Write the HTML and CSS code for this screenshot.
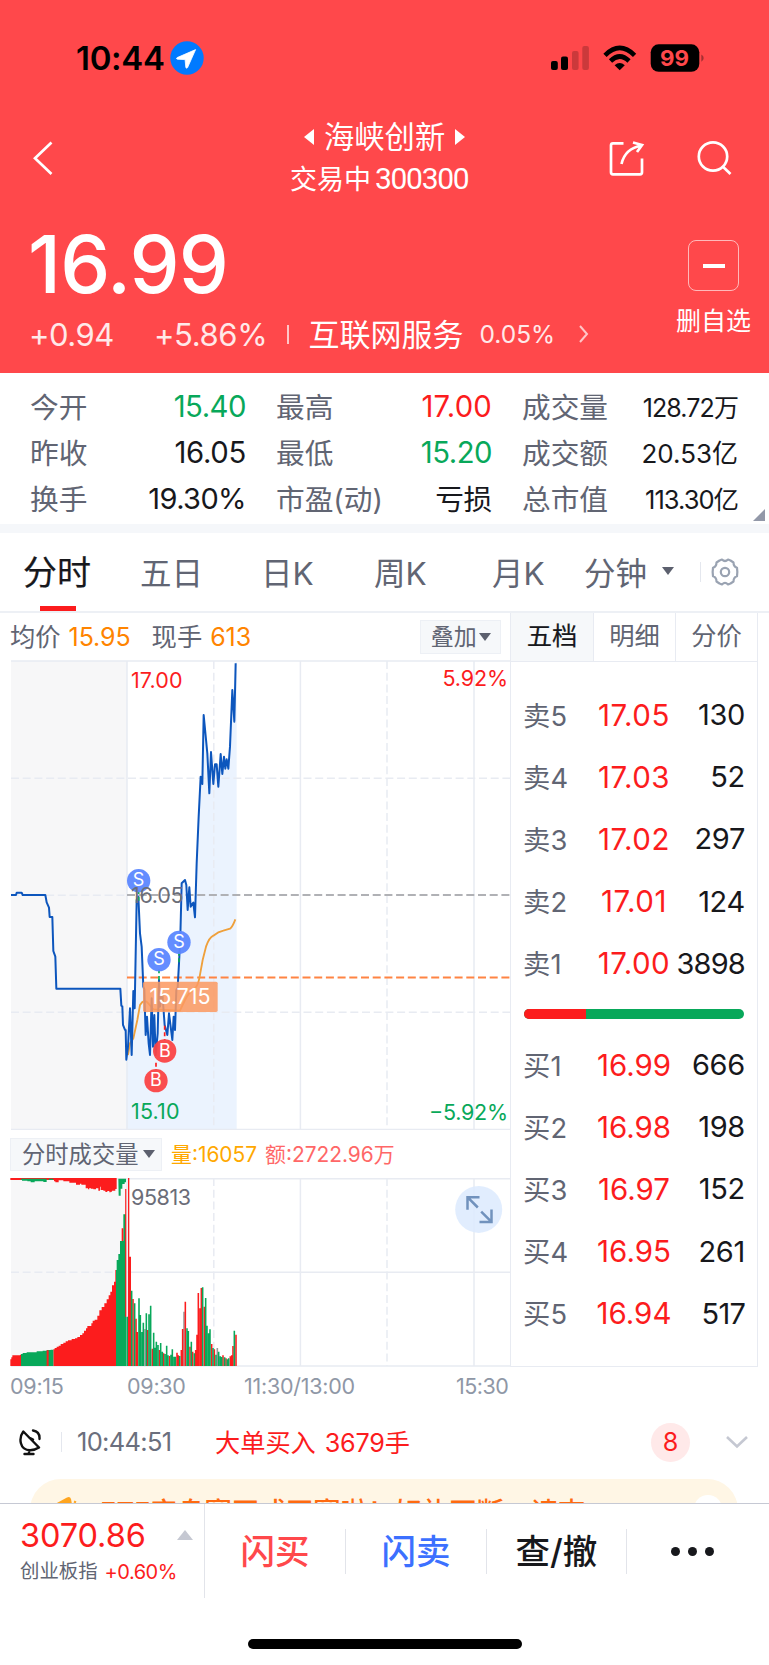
FILE: index.html
```html
<!DOCTYPE html>
<html lang="zh-CN">
<head>
<meta charset="utf-8">
<title>海峡创新 300300</title>
<link rel="stylesheet" href="styles.css">
</head>
<body>
<div class="app">
  <header class="header">
    <div class="status">
      <span class="clock">10:44</span>
      <svg class="loc" width="34" height="34" viewBox="0 0 34 34"><circle cx="17" cy="17" r="16.7" fill="#007aff"/><path d="M25.600 8.600 7.200 16.600c-1 .5-.8 1.500.3 1.600l7.600.4.700 7.700c.2 1 1.300 1.200 1.800.2Z" fill="#fff" stroke="#fff" stroke-width=".8" stroke-linejoin="round"/></svg>
      <svg class="sys" width="156" height="30" viewBox="549 42 156 30">
        <rect x="551" y="60" width="6.800" height="9" rx="2"/><rect x="561" y="55.500" width="7" height="13.500" rx="2"/>
        <g fill="#000" opacity=".2"><rect x="572" y="50" width="6.600" height="19" rx="2"/><rect x="582.300" y="45" width="6.600" height="24" rx="2"/></g>
        <g fill="none" stroke="#000" stroke-width="4.600"><path d="M605 54.300Q619.700 39.500 634.600 54.300"/><path d="M610.500 60Q619.700 51 629 60"/></g>
        <path d="M614.600 64.300Q619.700 59.600 624.800 64.300L619.700 69.300Z"/>
        <rect x="650.700" y="43.300" width="48.600" height="27.500" rx="8"/><path d="M701.300 53.500q2.400 1 2.400 3.600t-2.400 3.600Z" opacity=".35"/>
        <text x="660" y="65.300" class="batt" textLength="29" lengthAdjust="spacingAndGlyphs">99</text>
      </svg>
    </div>
    <nav class="nav">
      <svg class="back" width="22" height="36" viewBox="32 140 22 36"><path d="M51.500 142.500 35 158.200 51.500 174" /></svg>
      <div class="title">
        <div class="name"><i class="tri left"></i><span>海峡创新</span><i class="tri right"></i></div>
        <div class="code"><span>交易中</span><b>300300</b></div>
      </div>
      <svg class="act" width="126" height="38" viewBox="608 139 126 38">
        <path d="M623.500 143.300H613q-2 0-2 2v27q0 2 2 2h27q2 0 2-2V158.500"/><path d="M621.500 164Q625 148.500 641.500 145.500M633 142.500l9 2.500-5 7"/>
        <circle cx="713" cy="156.500" r="14.200"/><path d="M722.700 166.500 730.500 174"/>
      </svg>
    </nav>
    <div class="hero">
      <div class="hero-l">
        <div class="price">16.99</div>
        <div class="chg"><span class="c1">+0.94</span><span class="c2">+5.86%</span><i></i><span class="ind">互联网服务</span><span class="c3">0.05%</span>
          <svg width="12" height="20" viewBox="0 0 12 20"><path d="M2 2l7 8-7 8" fill="none" stroke="#ffc6c7" stroke-width="2"/></svg></div>
      </div>
      <div class="fav"><div class="minus"><i></i></div><span>删自选</span></div>
    </div>
  </header>

  <section class="quote">
    <div class="q"><span>今开</span><b class="g">15.40</b></div><div class="q"><span>最高</span><b class="r">17.00</b></div><div class="q s"><span>成交量</span><b class="n1">128.72万</b></div>
    <div class="q"><span>昨收</span><b>16.05</b></div><div class="q"><span>最低</span><b class="g">15.20</b></div><div class="q s"><span>成交额</span><b class="n2">20.53亿</b></div>
    <div class="q"><span>换手</span><b class="pct">19.30%</b></div><div class="q"><span>市盈(动)</span><b class="cn">亏损</b></div><div class="q s"><span>总市值</span><b class="n3">113.30亿</b></div>
    <i class="corner"></i>
  </section>

  <nav class="tabs">
    <span class="on">分时</span><span>五日</span><span>日K</span><span>周K</span><span>月K</span><span class="min">分钟<i class="down"></i></span>
    <i class="sep"></i>
    <svg width="30" height="30" viewBox="0 0 30 30" fill="none" stroke="#9aa3b2" stroke-width="2.200" stroke-linejoin="round"><path d="M9.500 3.500 12 2.500q3 3 6 0l2.500 1 3 2q0 4.200 3.500 5.200.700 4.300 0 8.600-3.500 1-3.500 5.200l-3 2-2.500 1q-3-3-6 0l-2.500-1-3-2q0-4.200-3.500-5.200-.700-4.300 0-8.600 3.500-1 3.500-5.200Z"/><circle cx="15" cy="15" r="4.200"/></svg>
  </nav>

  <main class="board">
    <div class="charts">
      <div class="info"><span>均价</span><b class="v1">15.95</b><span class="k2">现手</span><b class="v2">613</b><div class="overlay"><span>叠加</span><i class="down"></i></div></div>
      <svg class="chart" width="510" height="470" viewBox="0 660 510 470">
        <rect x="11" y="661" width="116" height="468.500" fill="#f7f7f8"/>
        <g transform="translate(0 650) scale(.33333)"><path class="area" d="M379 1438V1229L384 1190 390 1075 395 1215 400 1023 404 1075 410 750 415 740 420 850 425 890 430 1010 433 1018 437 1155 441 1100 446 1180 450 1215 455 1045 459 1190 463 1095 467 1215 473 1150 477 990 480 1070 487 1030 494 1125 502 1155 507 1090 512 1130 517 1170 521 1100 525 1140 529 1020 533 1012 537 940 541 860 545 700 555 690 559 705 563 780 568 712 572 770 580 758 585 802 590 640 596 500 602 380 607 402 611 195 622 310 628 430 633 306 640 402 645 343 650 343 655 410 662 312 667 372 672 320 676 356 680 328 685 356 690 290 697 120 703 215 707 35H710V1438Z"/></g>
        <g class="grid"><path d="M11 661H510M11 1129.500H510M127 661V1129.500M300.400 661V1129.500M474 661V1129.500"/>
        <path class="dash" d="M213.800 661V1129.500M387 661V1129.500M11 778.200H510M11 895.300H127M11 1012.300H510"/></g>
        <path class="mid" d="M127 895H510"/><path class="cost" d="M127 977.500H510"/>
        <g transform="translate(0 650) scale(.33333)">
          <path class="avg" d="M384 1215 390 1180 400 1165 412 1110 420 1065Q432 1045 445 1060L460 1078 540 1082Q550 1060 555 1050 566 1028 585 1015 594 1005 598 985L608 930 618 890Q628 862 640 857 655 845 670 842L690 836Q698 830 706 808"/>
          <path class="line" d="M33 735H48L50 728H65L68 735H136L140 757 147 773 149 801H157L160 903 166 920 169 1016H361L364 1067 367 1069 369 1125 375 1140H377L379 1229 384 1190 390 1075 395 1215 400 1023 404 1075 410 750 415 740 420 850 425 890 430 1010 433 1018 437 1155 441 1100 446 1180 450 1215 455 1045 459 1190 463 1095 467 1215 473 1150 477 990 480 1070 487 1030 494 1125 502 1155 507 1090 512 1130 517 1170 521 1100 525 1140 529 1020 533 1012 537 940 541 860 545 700 555 690 559 705 563 780 568 712 572 770 580 758 585 802 590 640 596 500 602 380 607 402 611 195 622 310 628 430 633 306 640 402 645 343 650 343 655 410 662 312 667 372 672 320 676 356 680 328 685 356 690 290 697 120 703 215 707 40"/>
          <path class="lead" stroke="#08a85a" d="M416 720V757M477 958V993M537 905V942"/><path class="lead" stroke="#fc1c1d" d="M494 1127V1170M468 1238V1260"/>
          <g fill="#5c87ff" fill-opacity=".95"><circle cx="416" cy="692" r="35"/><circle cx="477" cy="929" r="35"/><circle cx="537" cy="877" r="35"/></g>
          <g fill="#fb4346" fill-opacity=".95"><circle cx="494" cy="1203" r="35"/><circle cx="468" cy="1292" r="35"/></g>
          <rect x="429" y="995" width="224" height="91" rx="5" fill="#fb9961" fill-opacity=".86"/>
        </g>
        <g class="mk"><text x="138.600" y="886.200">S</text><text x="159" y="965.200">S</text><text x="179" y="947.800">S</text><text x="164.800" y="1056.700">B</text><text x="156" y="1086.300">B</text></g>
        <text x="131" y="687.500" fill="#fc1c1d" textLength="51.500">17.00</text>
        <text x="131" y="902.700" fill="#6b6d78" textLength="52.500">16.05</text>
        <text x="131" y="1119.200" fill="#08a85a" textLength="48.500">15.10</text>
        <text x="442.500" y="685.700" fill="#fc1c1d" textLength="65.500">5.92%</text>
        <text x="429" y="1120.300" fill="#08a85a" textLength="79">−5.92%</text>
        <text x="149.500" y="1004.200" fill="#fff" textLength="61">15.715</text>
      </svg>
      <div class="volinfo"><div class="sel"><span>分时成交量</span><i class="down"></i></div><span class="vol">量:16057</span><span class="amt">额:2722.96万</span></div>
      <svg class="chart" width="510" height="190" viewBox="0 1178 510 190">
        <rect x="11" y="1178.500" width="116" height="187.500" fill="#f7f7f8"/>
        <g class="grid"><path d="M11 1178.700H510M127 1272.300H510M11 1366H510M127 1178V1366M300.400 1178V1366M474 1178V1366"/><path class="dash" d="M213.800 1178V1366M387 1178V1366M11 1272.300H127"/></g>
        <g transform="translate(0 1120) scale(.33333)">
          <path fill="#fc1c1d" d="M31 738V718H34V712H37V706H60V704H63V738ZM160 738V688H164V684H170V680H176V677H182V672H190V668H197V664H204V661H215V657H225V655H232V651H240V645H247V640H252V632H258V625H262V618H274V610H278V602H284V599H292V587H298V571H305V561H313V550H320V538H326V526H331V515H336V496H342V485H346V450H350V738Z"/>
          <path fill="#08a85a" d="M63 738V702H68V699H80V697H110V694H128V692H140V690H152V689H160V738ZM348 738V450H350V420H355V402H360V363H370V283H378V738Z"/>
          <path fill="#fc1c1d" d="M140 738V691H146V738ZM365 363V325H370V363ZM375.500 590V207H379V590ZM384 738V173H388V738ZM388 738V410H393V738Z"/><path fill="#08a85a" d="M379 738V590H384V738Z"/>
          <path fill="#fc1c1d" d="M31 174H350V207H346V212H336V215H332V217H328V213H322V216H316V212H310V210H302V200H300V212H295V205H288V208H280V206H272V204H268V208H264V205H257V194H244V191H240V194H228V188H208V184H190V181H176V187H166V184H162V180H31Z"/>
          <path fill="#08a85a" d="M63 176H140V186H130V184H104V187H92V184H82V182H66V180H63ZM146 176H160V180H146ZM355 176H378V187H374V192H367V206H362V227H356Z"/>
          <g fill="none" stroke-width="4.700">
            <path stroke="#999" d="M435 738V627M552 738V575M652 738V684"/>
            <path stroke="#fc1c1d" d="M399 738V537M408 738V596M412 738V636M443 738V630M457 738V686M478 738V690M491 738V700M509 738V708M531 738V698M535 738V706M544 738V690M548 738V627M556 738V545M570 738V680M578 738V695M587 738V690M591 738V644M595 738V519M600 738V565M604 738V504M613 738V560M635 738V672M643 738V688M669 738V706M678 738V715M691 738V709M695 738V706M699 738V678M708 738V644"/>
            <path stroke="#08a85a" d="M395 738V512M404 738V550M417 738V535M421 738V585M426 738V636M430 738V608M439 738V580M447 738V583M452 738V557M461 738V638M465 738V683M469 738V665M474 738V675M482 738V669M487 738V695M495 738V702M500 738V677M504 738V706M513 738V704M517 738V688M522 738V710M526 738V710M539 738V708M561 738V625M565 738V633M574 738V665M583 738V700M608 738V502M617 738V534M621 738V617M626 738V640M630 738V628M639 738V684M648 738V704M656 738V695M661 738V709M665 738V711M674 738V712M682 738V718M686 738V715M703 738V632"/>
          </g>
        </g>
        <text x="131" y="1204.800" fill="#6b6d78" textLength="60">95813</text>
        <circle cx="478.700" cy="1209.400" r="23.500" fill="#dceafe" fill-opacity=".85"/>
        <path d="M479.500 1197.200H467.500V1209.700M467.500 1197.200 477.800 1207.500M479.500 1221.900H491.500V1209.400M491.500 1221.900 481.200 1211.600" fill="none" stroke="#7192bd" stroke-width="2.500"/>
      </svg>
      <div class="axis"><span>09:15</span><span class="a2">09:30</span><span class="a3">11:30/13:00</span><span class="a4">15:30</span></div>
    </div>
    <aside class="book">
      <div class="btabs"><span class="on">五档</span><span>明细</span><span>分价</span></div>
      <div class="rows">
        <div><span>卖5</span><b>17.05</b><em>130</em></div><div><span>卖4</span><b>17.03</b><em>52</em></div><div><span>卖3</span><b>17.02</b><em>297</em></div><div><span>卖2</span><b>17.01</b><em>124</em></div><div><span>卖1</span><b>17.00</b><em>3898</em></div>
      </div>
      <div class="ratio"><i></i></div>
      <div class="rows buys">
        <div><span>买1</span><b>16.99</b><em>666</em></div><div><span>买2</span><b>16.98</b><em>198</em></div><div><span>买3</span><b>16.97</b><em>152</em></div><div><span>买4</span><b>16.95</b><em>261</em></div><div><span>买5</span><b>16.94</b><em>517</em></div>
      </div>
    </aside>
  </main>

  <section class="news">
    <svg width="24" height="28" viewBox="19 1428 24 28" fill="none" stroke="#111" stroke-width="2.400" stroke-linecap="round" stroke-linejoin="round"><path d="M23.300 1431.500C18.500 1438 19.500 1450 30 1450.200Q35 1450.200 39 1447.500ZM29 1437.500 33 1439.500M29 1450.500V1454M24.500 1454H33.500M33 1430.500Q40 1431.500 39.500 1439"/></svg>
    <i class="sep"></i><span class="time">10:44:51</span><span class="msg">大单买入</span><span class="msg m2">3679手</span><span class="badge">8</span>
    <svg class="chev" width="24" height="14" viewBox="0 0 24 14"><path d="M2 2l10 9.500L22 2" fill="none" stroke="#c5c8d2" stroke-width="2.600"/></svg>
  </section>
  <div class="promo"><div class="pill"><svg width="24" height="24" viewBox="0 0 24 24"><path d="M2 7 14 .5q3-1.500 4 1.500l3 16L2 14Z" fill="#ffa51f"/><path d="M21 4.500l2 1" stroke="#ffa51f" stroke-width="2"/></svg><span>ETF实盘赛正式开赛啦！好礼不断，请查</span><i></i></div></div>

  <footer class="bar">
    <div class="idx"><div class="i1"><b>3070.86</b><i class="up"></i></div><div class="i2"><span>创业板指</span><em>+0.60%</em></div></div>
    <div class="btn buy">闪买</div><div class="btn sell">闪卖</div><div class="btn chk">查/撤</div><div class="btn more"><i></i><i></i><i></i></div>
    <div class="home"></div>
  </footer>
</div>
</body>
</html>
```
FILE: styles.css
```css
* { box-sizing: border-box; }
body { margin: 0; background: #fff; }
.app { width: 769px; height: 1665px; overflow: hidden; font-family: Inter, "Noto Sans CJK SC", sans-serif; color: #17181c; display: flex; flex-direction: column; white-space: nowrap; }
b, em, i { font-weight: inherit; font-style: normal; }
svg { display: block; flex: none; }

.header { height: 373px; background: #ff484b; color: #fff; flex: none; }
.status { height: 115px; display: flex; align-items: center; padding-left: 76px; color: #000; }
.clock { width: 94px; font-size: 33px; font-weight: 600; letter-spacing: -.3px; }
.sys { margin-left: 345px; }
.batt { font: 700 22px Inter, sans-serif; fill: #ff484b; }
.nav { height: 90px; display: flex; padding-left: 32px; }
.nav path, .nav circle { fill: none; stroke: #fff; stroke-width: 2.700; }
.back { margin-top: 25px; }
.title { width: 240px; margin-left: 211px; }
.name { display: flex; align-items: center; height: 44px; gap: 10px; padding-left: 39px; font-size: 30.300px; }
.name span { padding-bottom: 5px; }
.tri { border: 8px solid transparent; width: 0; height: 0; }
.tri.left { border-left: 0; border-right: 10px solid #fff; }
.tri.right { border-right: 0; border-left: 10px solid #fff; }
.code { display: flex; align-items: center; height: 39px; padding-left: 25px; font-size: 27px; gap: 4px; }
.code span { padding-bottom: 3px; }
.code b { font: 400 30px Roboto, sans-serif; letter-spacing: -1.300px; }
.act { margin-top: 24px; margin-left: 103px; }
.hero { display: flex; justify-content: space-between; padding: 0 18px 0 30px; }
.price { height: 119px; line-height: 119px; font-size: 79.500px; font-weight: 500; letter-spacing: -.8px; margin-left: -2px; }
.chg { display: flex; align-items: center; height: 20px; font-size: 31px; color: #ffe9e9; margin-left: -1px; }
.c1 { width: 125px; font-size: 31px; letter-spacing: -.5px; }
.c2 { width: 133px; font-size: 31px; letter-spacing: -.4px; }
.chg i { width: 1.500px; height: 19px; background: #ffc6c7; }
.ind { margin-left: 20px; width: 171px; color: #fff; padding-bottom: 4px; }
.c3 { font-size: 24.500px; width: 98px; }
.fav { width: 75px; padding-top: 35px; display: flex; flex-direction: column; align-items: center; font-size: 25px; line-height: 30px; gap: 15px; }
.minus { width: 51px; height: 51px; border: 1.500px solid #ffb9ba; border-radius: 8px; display: grid; place-items: center; }
.minus i { width: 22px; height: 4px; background: #fff; }

.quote { height: 160px; border-bottom: 9px solid #f5f7fa; padding: 10px 31px 0 30px; display: grid; grid-template-columns: 216px 246px 246px; grid-auto-rows: 46.200px; position: relative; flex: none; }
.q { display: flex; justify-content: space-between; align-items: center; font-size: 28.700px; color: #17181c; }
.q:nth-child(3n+2) { padding-left: 30px; }
.q:nth-child(3n) { padding-left: 30px; }
.q span { color: #616573; padding-bottom: 2px; }
.q b { font-size: 29.300px; letter-spacing: -.3px; }
.q .pct { font-size: 29px; letter-spacing: -.6px; }
.q .cn { font-size: 28.700px; padding-bottom: 2px; }
.q .n1, .q .n2, .q .n3 { font-size: 26px; letter-spacing: 0; padding-bottom: 1px; }
.q .n1 { font-size: 25px; letter-spacing: -.9px; }
.q .n3 { font-size: 25.500px; letter-spacing: -1px; }
.q .g { color: #08a85a; letter-spacing: -.5px; }
.q .r { color: #fc1c1d; letter-spacing: .2px; }
.corner { position: absolute; right: 4px; bottom: 3px; border-left: 12px solid transparent; border-bottom: 12px solid #9298a8; }

.tabs { height: 80px; display: grid; grid-template-columns: 117px 121px 113px 118px 92px 116px 10px 30px; padding-left: 23px; font-size: 31.500px; color: #616573; align-items: center; border-bottom: 2px solid #edf0f5; flex: none; }
.tabs span { padding-bottom: 2px; }
.tabs .on { font-size: 34px; color: #17181c; -webkit-text-stroke: .2px #17181c; height: 78px; line-height: 79px; background: linear-gradient(#fc1c1d, #fc1c1d) 17px 73px / 36px 5px no-repeat; }
.min { display: flex; align-items: center; gap: 15px; }
.down { display: inline-block; border: 6px solid transparent; border-top: 8px solid #5c606e; border-bottom: 0; }
.sep { width: 1px; height: 20px; background: #e4e7ee; }

.board { display: grid; grid-template-columns: 510px 248px; height: 797px; flex: none; }
.info { height: 47px; display: flex; align-items: center; padding-left: 10px; font-size: 25.300px; color: #616573; }
.info span { padding-bottom: 3px; }
.info b { color: #ff8400; font-size: 25px; letter-spacing: -.1px; }
.v1 { margin-left: 8px; width: 83px; }
.v2 { margin-left: 8px; width: 210px; }
.overlay { width: 81px; height: 34px; background: #f6f8fa; border: 1px solid #edf0f5; display: flex; align-items: center; justify-content: center; gap: 2px; font-size: 23px; }
.chart text { font-family: Inter, sans-serif; font-size: 21.500px; }
.grid { fill: none; stroke: #e8ebf2; stroke-width: 1.500; }
.dash { stroke-dasharray: 8 3.700; }
.mid { stroke: #b0b1b5; stroke-width: 2; stroke-dasharray: 8 3.700; }
.cost { stroke: #ff8443; stroke-width: 2; stroke-dasharray: 8 3.700; }
.area { fill: #ebf3fe; }
.line { fill: none; stroke: #0d56bd; stroke-width: 6; stroke-linejoin: round; }
.avg { fill: none; stroke: #efa03b; stroke-width: 5.500; }
.lead { stroke-width: 5; stroke-dasharray: 12 8; }
.chart .mk text { font-size: 18px; fill: #fff; text-anchor: middle; }
.volinfo { height: 48px; display: flex; align-items: center; padding-left: 10px; font-size: 20.900px; }
.volinfo > span { padding-bottom: 2px; }
.sel { width: 152px; height: 33px; display: flex; align-items: center; padding-left: 11px; gap: 5px; background: #f6f8fa; border: 1px solid #edf0f5; font-size: 23.300px; color: #616573; }
.sel span { padding-bottom: 2px; }
.vol { color: #ffa800; margin-left: 9px; width: 94px; }
.amt { color: #ff6767; }
.axis { height: 36px; display: grid; grid-template-columns: 117px 117px 212px 60px; padding-left: 10px; align-items: center; font-size: 21.500px; color: #8f97a6; letter-spacing: -.25px; }
.a4 { letter-spacing: -.5px; }
.book { border: 1.500px solid #e8ebf2; border-top: 0; height: 754px; }
.btabs { display: grid; grid-template-columns: 1fr 1fr 1fr; height: 49px; border-bottom: 1.500px solid #e8ebf2; font-size: 25.300px; color: #616573; text-align: center; line-height: 46px; }
.btabs span + span { border-left: 1.500px solid #e8ebf2; }
.btabs .on { background: #f6f8fa; color: #17181c; -webkit-text-stroke: .2px #17181c; }
.rows { padding: 0 12px 0 12px; }
.rows div { height: 62.200px; display: grid; grid-template-columns: 67px 88px 1fr; align-items: center; font-size: 29px; letter-spacing: -.3px; padding-bottom: 1px; }
.btabs + .rows { padding-top: 22px; }
.rows span { color: #616573; font-size: 27.300px; padding-bottom: 2px; letter-spacing: .2px; }
.rows b { color: #fc1c1d; text-align: center; font-size: 29.500px; letter-spacing: .5px; }
.buys b { letter-spacing: 0; }
.rows em { text-align: right; margin-left: -10px; }
.rows div:last-child em { letter-spacing: -.8px; }
.ratio { height: 10px; margin: 14px 13px 15px 13px; border-radius: 5px; background: #08a85a; overflow: hidden; }
.ratio i { display: block; width: 28.300%; height: 10px; background: #fc1c1d; }

.news { height: 69px; display: flex; align-items: center; padding: 0 20px 5px 19px; font-size: 25.200px; color: #fc1c1d; flex: none; }
.news .sep { margin: 0 15px 0 18px; }
.time { color: #6b6f7d; width: 138px; font-size: 25.500px; padding-bottom: 1px; letter-spacing: -.7px; }
.m2 { margin-left: 9px; width: 325px; letter-spacing: -.2px; }
.msg { flex: none; padding-bottom: 3px; }
.badge { width: 39px; height: 39px; border-radius: 50%; background: #ffe9e9; display: grid; place-items: center; margin-left: auto; margin-right: 35px; }
.promo { height: 24px; padding: 0 31px 0 30px; overflow: hidden; flex: none; }
.pill { height: 62px; border-radius: 31px; background: #fff6e5; padding: 18px 16px 0 23px; display: flex; color: #ff6a10; font-size: 27.200px; font-weight: 500; line-height: 32px; }
.pill span { margin-left: 23px; flex: 1; }
.pill i { width: 28px; height: 28px; border-radius: 50%; background: #fff; margin-top: -2px; }

.bar { height: 162px; border-top: 1.500px solid #c6c9d4; display: grid; grid-template-columns: 205px 141px 141px 140px 142px; grid-template-rows: 94px 1fr; }
.idx { border-right: 1.500px solid #e2e4ea; padding: 12px 11px 0 20px; }
.i1 { height: 38px; display: flex; align-items: center; justify-content: space-between; color: #fc1c1d; font-size: 32.500px; letter-spacing: -.1px; }
.up { border: 8px solid transparent; border-bottom: 10px solid #c5c8d2; border-top: 0; }
.i2 { height: 36px; display: flex; align-items: center; gap: 7px; font-size: 19.400px; line-height: 22px; color: #616573; }
.i2 span { padding-bottom: 2px; }
.i2 em { color: #fc1c1d; font-size: 20px; letter-spacing: -.5px; }
.btn { height: 45px; margin-top: 25px; border-right: 1.500px solid #e2e4ea; display: flex; align-items: center; justify-content: center; font-size: 34.500px; font-weight: 500; padding-bottom: 5px; }
.buy { color: #ff484b; }
.sell { color: #3c70ff; }
.more { border: 0; gap: 8px; padding: 0 11px 0 0; }
.more i { width: 9.200px; height: 9.200px; border-radius: 50%; background: #17181c; }
.home { grid-column: 1 / -1; justify-self: center; margin-top: 41px; width: 274px; height: 10px; border-radius: 5px; background: #000; }
```
